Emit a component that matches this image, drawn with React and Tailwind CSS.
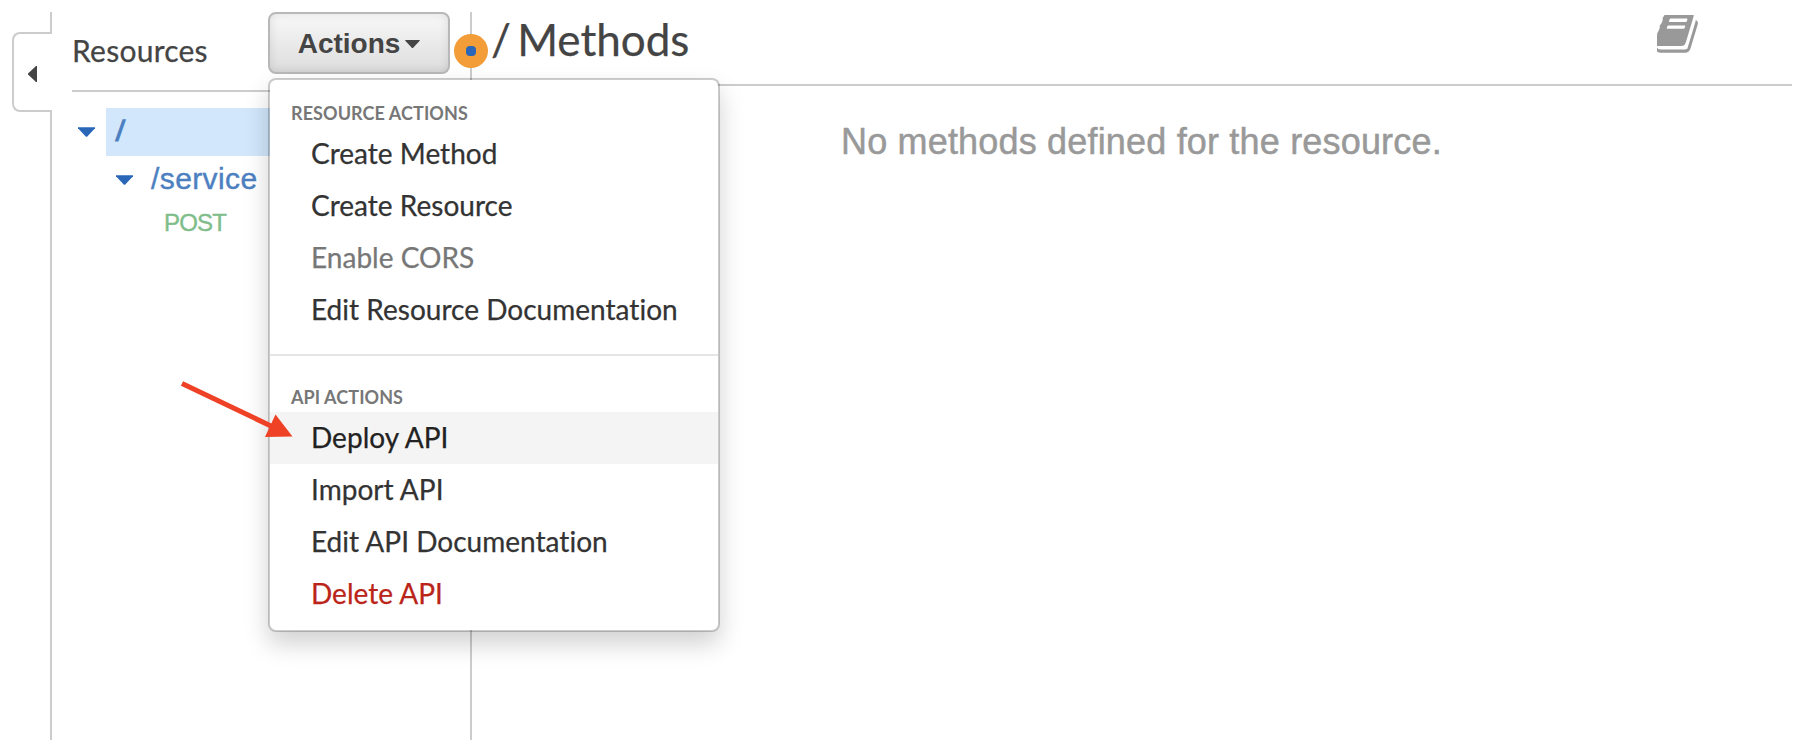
import React from "react";

const resourceActions = [
  { label: "Create Method", tone: "text-[#333333]" },
  { label: "Create Resource", tone: "text-[#333333]" },
  { label: "Enable CORS", tone: "text-[#777777]" },
  { label: "Edit Resource Documentation", tone: "text-[#333333]" },
];

const apiActions = [
  { label: "Deploy API", tone: "bg-[#f4f4f4] text-[#222222]" },
  { label: "Import API", tone: "text-[#333333]" },
  { label: "Edit API Documentation", tone: "text-[#333333]" },
  { label: "Delete API", tone: "text-[#bb2419]" },
];

function Caret({ className }) {
  return (
    <svg viewBox="0 0 18 10" className={className} fill="currentColor">
      <path d="M0 0h18v1L9.600 10h-1.200L0 1z" />
    </svg>
  );
}

function BookIcon() {
  return (
    <svg viewBox="122 250 1546 1420" preserveAspectRatio="none" className="h-[38px] w-[41px]" fill="#999999">
      <path d="M1639 478q40 57 18 129l-275 906q-19 64-76.5 107.500t-122.500 43.500h-923q-77 0-148.500-53.500t-99.500-131.500q-24-67-2-127 0-4 3-27t4-37q1-8-3-21.500t-3-19.500q2-11 8-21t16.500-23.500 16.500-23.500q23-38 45-91.500t30-91.500q3-10 .5-30t-.5-28q3-11 17-28t17-23q21-36 42-92t25-90q1-9-2.500-32t.5-28q4-13 22-30.500t22-22.500q19-26 42.500-84.500t27.500-96.500q1-8-3-25.500t-2-26.500q2-8 9-18t18-23 17-21q8-12 16.500-30.500t15-35 16-36 19.500-32 26.500-23.500 36-11.500 47.500 5.500l-1 3q38-9 51-9h761q74 0 114 56t18 130l-274 906q-36 119-71.500 153.500t-128.500 34.500h-869q-27 0-38 15-11 16-1 43 24 70 144 70h923q29 0 56-15.500t35-41.500l300-987q7-22 5-57 38 15 59 43zm-1064 2q-4 13 2 22.500t20 9.500h608q13 0 25.500-9.500t16.500-22.500l21-64q4-13-2-22.500t-20-9.500h-608q-13 0-25.500 9.500t-16.500 22.500zm-83 256q-4 13 2 22.500t20 9.500h608q13 0 25.500-9.500t16.500-22.500l21-64q4-13-2-22.500t-20-9.500h-608q-13 0-25.500 9.500t-16.500 22.500z" />
    </svg>
  );
}

function MenuGroup({ title, items }) {
  return (
    <div>
      <div className="flex h-[38px] items-center pl-[21px] pt-2 text-[18px] font-bold leading-6 tracking-[0.08px] text-[#777777]">
        {title}
      </div>
      {items.map((item) => (
        <div key={item.label} className={`flex h-[52px] items-center pb-[2px] pl-[41px] text-[28px] leading-[40px] tracking-[0.02px] [-webkit-text-stroke:0.25px] ${item.tone}`}>
          {item.label}
        </div>
      ))}
    </div>
  );
}

function ActionsMenu() {
  return (
    <div className="absolute left-[268px] top-[78px] z-20 w-[452px] whitespace-nowrap rounded-lg border-2 border-black/20 bg-white bg-clip-padding py-[10px] shadow-[0_12px_24px_rgba(0,0,0,0.18)]">
      <MenuGroup title="RESOURCE ACTIONS" items={resourceActions} />
      <div className="my-[18px] h-[2px] bg-[#e5e5e5]" />
      <MenuGroup title="API ACTIONS" items={apiActions} />
    </div>
  );
}

export default function App() {
  return (
    <div className="relative flex h-[740px] w-full overflow-hidden whitespace-nowrap bg-white font-['Lato',sans-serif] text-[#444444] [font-variant-ligatures:none]">
      <div className="flex w-[52px] shrink-0 flex-col pt-3">
        <div className="h-5 border-r-2 border-[#cccccc]" />
        <div className="ml-3 flex h-20 items-center rounded-l-lg border-2 border-r-0 border-[#cccccc] pl-[14px] pt-[4px]">
          <svg viewBox="0 0 9 16" className="h-4 w-[9px]" fill="#444444">
            <path d="M9 0v16H8L0 8.600V7.400L8 0z" />
          </svg>
        </div>
        <div className="-mt-[2px] grow border-r-2 border-[#cccccc]" />
      </div>

      <aside className="flex w-[420px] shrink-0 flex-col pt-3">
        <div className="flex grow flex-col border-r-2 border-[#cccccc]">
          <div className="ml-5 flex h-20 items-start justify-between border-b-2 border-[#cccccc] pr-5">
            <h2 className="pt-[18px] text-[30px] leading-[40px] tracking-[0.25px] [-webkit-text-stroke:0.25px]">Resources</h2>
            <button className="flex h-[62px] w-[182px] items-center justify-center gap-[5px] rounded-lg border-2 border-[#b8b8b8] bg-linear-to-b from-[#f8f8f8] to-[#dddddd] pt-[2px] font-['Liberation_Sans',sans-serif] text-[28px] font-bold text-[#444444] shadow-[inset_0_0_10px_rgba(0,0,0,0.1)]">
              <span>Actions</span>
              <Caret className="h-[8px] w-[15px]" />
            </button>
          </div>
          <div className="pt-4 font-['Liberation_Sans',sans-serif] text-[30px] leading-[46px] text-[#4d80c0]">
            <div className="flex h-12 items-center">
              <Caret className="ml-[26px] mr-[11px] h-[10px] w-[17px] text-[#2a66b8]" />
              <div className="h-12 grow bg-[#d2e7fc] pl-[10px] font-bold">
                <span className="inline-block -skew-x-[9deg]">/</span>
              </div>
            </div>
            <div className="flex h-12 items-start">
              <Caret className="ml-[64px] mr-[18px] mt-[19px] h-[10px] w-[17px] text-[#2a66b8]" />
              <span className="tracking-[0.4px] [-webkit-text-stroke:0.4px]">/service</span>
            </div>
            <div className="flex h-10 items-center pb-[2px] pl-[112px] text-[24px] leading-[38px] tracking-[-0.8px] text-[#7fbd8b] [-webkit-text-stroke:0.4px]">POST</div>
          </div>
        </div>
      </aside>

      <main className="flex grow flex-col pr-[6px]">
        <header className="flex h-[86px] items-start justify-between border-b-2 border-[#cccccc] pr-[94px]">
          <h1 className="pl-[19px] pt-[9px] text-[44px] leading-[60px] [-webkit-text-stroke:0.25px] [word-spacing:-5px]">/ Methods</h1>
          <div className="pt-[15px]">
            <BookIcon />
          </div>
        </header>
        <p className="pl-[369px] pt-[32px] font-['Liberation_Sans',sans-serif] text-[36px] leading-[48px] tracking-[0.18px] text-[#999999] [-webkit-text-stroke:0.5px]">
          No methods defined for the resource.
        </p>
      </main>

      <div className="absolute left-[454px] top-[34px] z-10 flex h-[34px] w-[34px] items-center justify-center rounded-full bg-[#f29d38]">
        <div className="h-[10px] w-[10px] rounded-[4px] bg-[#2a66b8]" />
      </div>

      <ActionsMenu />

      <svg viewBox="0 0 120 64" className="absolute left-[178px] top-[378px] z-30 h-[64px] w-[120px]">
        <path d="M4 5.500L93 48" stroke="#ee4125" strokeWidth="5" />
        <path d="M97.500 36.500L114.500 58.500L87 59z" fill="#ee4125" />
      </svg>
    </div>
  );
}
